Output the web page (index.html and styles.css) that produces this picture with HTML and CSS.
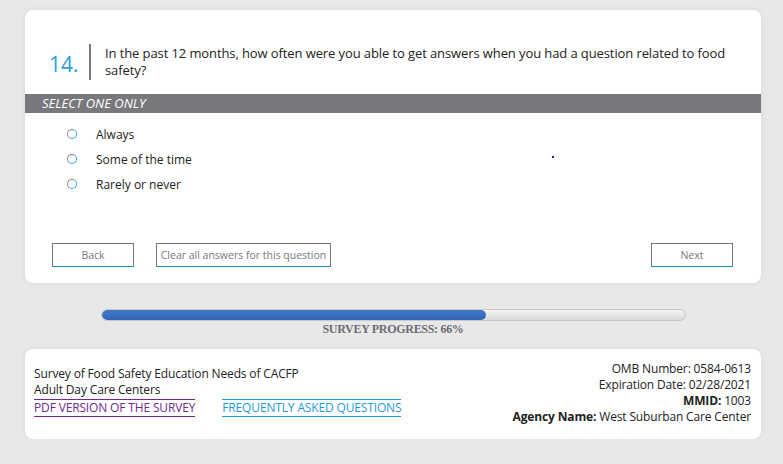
FILE: index.html
```html
<!DOCTYPE html>
<html lang="en">
  <head>
    <meta charset="UTF-8" />
    <title>Survey - Question 14</title>
    <link rel="stylesheet" href="styles.css">
  </head>
  <body>
    <div class="page">
      <div class="card question-card">
        <div class="question">
          <div class="qnum">14.</div>
          <div class="qtext">
            In the past 12 months, how often were you able to get answers when
            you had a question related to food safety?
          </div>
        </div>
        <div class="band">SELECT ONE ONLY</div>
        <ul class="options">
          <li><span class="radio"></span>Always</li>
          <li><span class="radio"></span>Some of the time</li>
          <li><span class="radio"></span>Rarely or never</li>
        </ul>
        <span class="dot"></span>
        <div class="actions">
          <button class="btn btn-back">Back</button>
          <button class="btn btn-clear">Clear all answers for this question</button>
          <button class="btn btn-next">Next</button>
        </div>
      </div>

      <div class="progress">
        <div class="progress-bar">
          <div class="progress-fill" style="width: 66%"></div>
        </div>
        <div class="progress-label">SURVEY PROGRESS: 66%</div>
      </div>

      <div class="card footer">
        <div class="footer-left">
          <div>Survey of Food Safety Education Needs of CACFP</div>
          <div>Adult Day Care Centers</div>
          <div class="links">
            <a href="#" class="link visited">PDF VERSION OF THE SURVEY</a>
            <a href="#" class="link">FREQUENTLY ASKED QUESTIONS</a>
          </div>
        </div>
        <div class="footer-right">
          <div>OMB Number: 0584-0613</div>
          <div>Expiration Date: 02/28/2021</div>
          <div><b>MMID:</b> 1003</div>
          <div><b>Agency Name:</b> West Suburban Care Center</div>
        </div>
      </div>
    </div>
  </body>
</html>
```

FILE: styles.css
```css
body {
  margin: 0;
  background-color: #e8e8e8;
  color: #222;
  font-family: "Open Sans", Arial, sans-serif;
}
.page {
  padding: 10px 22px 0 25px;
}
.card {
  background-color: #fff;
  border-radius: 8px;
  box-shadow: 0 0 6px rgba(0, 0, 0, 0.07);
}
.question-card {
  position: relative;
  padding-top: 34px;
  padding-bottom: 16px;
}
.question {
  display: flex;
  align-items: center;
  padding-left: 24px;
  padding-right: 20px;
}
.qnum {
  width: 40px;
  flex: none;
  color: #2a9fd6;
  font-size: 21px;
  padding-top: 3px;
}
.qtext {
  border-left: 2px solid #7a7a7a;
  padding-left: 14px;
  font-size: 13px;
  letter-spacing: -0.1px;
  line-height: 17px;
  padding-top: 1px;
  padding-bottom: 1px;
}
.band {
  margin-top: 14px;
  height: 19px;
  line-height: 19px;
  background-color: #79787c;
  color: #fff;
  font-style: italic;
  font-size: 13px;
  padding-left: 17px;
}
.options {
  list-style: none;
  margin: 9px 0 0 0;
  padding: 0 0 0 41px;
}
.options li {
  display: flex;
  align-items: center;
  height: 25px;
  font-size: 12px;
}
.radio {
  width: 8px;
  height: 8px;
  border: 1.5px solid;
  border-color: #8a8a8a #2aa8e0 #2aa8e0 #8a8a8a;
  border-radius: 50%;
  margin-left: 1px;
  margin-right: 19px;
  margin-top: -1px;
}
.dot {
  position: absolute;
  left: 527px;
  top: 146px;
  width: 2px;
  height: 2px;
  background-color: #1020e0;
}
.actions {
  display: flex;
  margin-top: 46px;
  padding: 0 28px 0 27px;
}
.btn {
  height: 24px;
  padding: 0;
  background-color: #fff;
  border: 1px solid #777;
  border-bottom: 1px solid #1a8fc8;
  color: #777;
  font-family: "Open Sans", Arial, sans-serif;
  font-size: 10.5px;
  white-space: nowrap;
  cursor: pointer;
}
.btn-back,
.btn-next {
  width: 82px;
}
.btn-clear {
  margin-left: 22px;
  width: 175px;
}
.btn-next {
  margin-left: auto;
}
.progress {
  padding: 26px 0 12px 0;
  display: flex;
  flex-direction: column;
  align-items: center;
}
.progress-bar {
  width: 583px;
  height: 10px;
  border: 1px solid #c8c8c8;
  border-radius: 6px;
  background: linear-gradient(#f4f4f4, #dadada);
  overflow: hidden;
}
.progress-fill {
  height: 100%;
  background: linear-gradient(#4377c7, #3366b8);
  border-radius: 6px;
}
.progress-label {
  font-family: "Liberation Serif", "Times New Roman", serif;
  font-size: 12px;
  letter-spacing: -0.3px;
  font-weight: bold;
  color: #6c6c76;
  margin-top: 1px;
}
.footer {
  height: 90px;
  display: flex;
  align-items: center;
  justify-content: space-between;
  padding: 0 10px 0 9px;
  font-size: 12px;
  letter-spacing: -0.15px;
  line-height: 16px;
}
.footer-left {
  margin-top: -5px;
}
.footer-right {
  text-align: right;
  margin-top: -2px;
}
.links {
  display: flex;
  gap: 27px;
  margin-top: 1px;
}
.link {
  text-decoration: none;
  color: #1e9bd7;
  border-top: 1px solid #1e9bd7;
  border-bottom: 1px solid #1e9bd7;
}
.link.visited {
  color: #6f2a8f;
  border-color: #6f2a8f;
}
```
